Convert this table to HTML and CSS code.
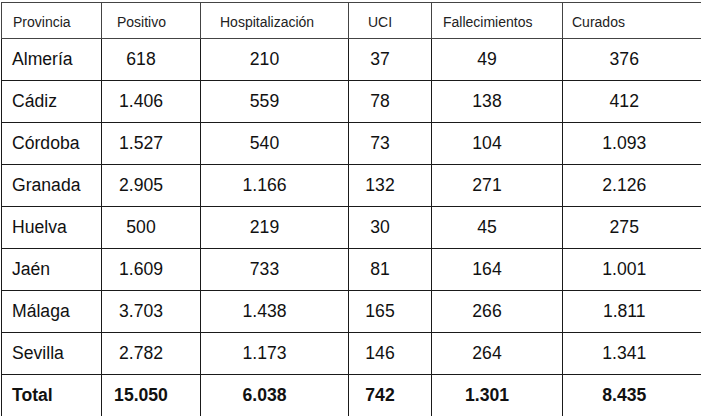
FILE: index.html
```html
<!DOCTYPE html>
<html lang="es">
<head>
<meta charset="utf-8">
<title>Datos por provincia</title>
<link rel="stylesheet" href="styles.css">
</head>
<body>
<table class="data">
  <colgroup>
    <col class="c1"><col class="c2"><col class="c3"><col class="c4"><col class="c5"><col class="c6">
  </colgroup>
  <thead>
    <tr class="head">
      <th class="h1">Provincia</th>
      <th class="h2">Positivo</th>
      <th class="h3">Hospitalización</th>
      <th class="h4">UCI</th>
      <th class="h5">Fallecimientos</th>
      <th class="h6">Curados</th>
    </tr>
  </thead>
  <tbody>
    <tr><td class="name">Almería</td><td>618</td><td>210</td><td>37</td><td>49</td><td class="last">376</td></tr>
    <tr><td class="name">Cádiz</td><td>1.406</td><td>559</td><td>78</td><td>138</td><td class="last">412</td></tr>
    <tr><td class="name">Córdoba</td><td>1.527</td><td>540</td><td>73</td><td>104</td><td class="last">1.093</td></tr>
    <tr><td class="name">Granada</td><td>2.905</td><td>1.166</td><td>132</td><td>271</td><td class="last">2.126</td></tr>
    <tr><td class="name">Huelva</td><td>500</td><td>219</td><td>30</td><td>45</td><td class="last">275</td></tr>
    <tr><td class="name">Jaén</td><td>1.609</td><td>733</td><td>81</td><td>164</td><td class="last">1.001</td></tr>
    <tr><td class="name">Málaga</td><td>3.703</td><td>1.438</td><td>165</td><td>266</td><td class="last">1.811</td></tr>
    <tr><td class="name">Sevilla</td><td>2.782</td><td>1.173</td><td>146</td><td>264</td><td class="last">1.341</td></tr>
    <tr class="total"><td class="name">Total</td><td>15.050</td><td>6.038</td><td>742</td><td>1.301</td><td class="last">8.435</td></tr>
  </tbody>
</table>
</body>
</html>
```

FILE: styles.css
```css
html, body {
  margin: 0;
  padding: 0;
  background: #ffffff;
  overflow: hidden;
}

body {
  padding: 2px 0 0 1px;
  font-family: "Liberation Sans", Arial, sans-serif;
  color: #111111;
}

.data {
  border-collapse: collapse;
  table-layout: fixed;
  width: 704px;
}

.c1 { width: 100px; }
.c2 { width: 99px; }
.c3 { width: 148px; }
.c4 { width: 83px; }
.c5 { width: 131px; }
.c6 { width: 143px; }

.data th,
.data td {
  border: 1px solid #1a1a1a;
  padding: 0;
}

.data .head th {
  height: 33px;
  font-size: 14px;
  font-weight: normal;
  text-align: left;
  vertical-align: middle;
  padding-top: 2px;
  color: #222222;
  border-color: #444444;
}

.data .head .h1 { padding-left: 11px; }
.data .head .h2 { padding-left: 15px; }
.data .head .h3 { padding-left: 19px; }
.data .head .h4 { padding-left: 19px; }
.data .head .h5 { padding-left: 11px; }
.data .head .h6 { padding-left: 9px; border-right: none; }

.data td {
  height: 41px;
  font-size: 17.6px;
  text-align: center;
  padding-right: 20px;
  vertical-align: middle;
}

.data td.name {
  text-align: left;
  padding-left: 10px;
  padding-right: 0;
}

.data td.last {
  border-right: none;
}

.total td {
  font-weight: bold;
}
```
